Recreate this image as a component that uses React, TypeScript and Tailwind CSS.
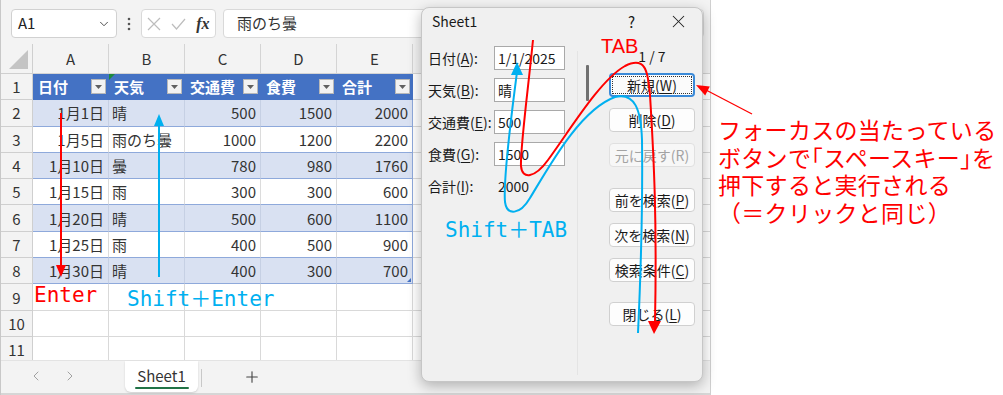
import React from "react";
import { ChevronDown, ChevronLeft, ChevronRight, Plus, X } from "lucide-react";

const JP = "font-['Noto_Sans_CJK_JP','Noto_Sans',sans-serif]";
const MONO = "font-['DejaVu_Sans_Mono','Noto_Sans_CJK_JP',monospace]";

const colLetters = ["A", "B", "C", "D", "E"];
const headers = ["日付", "天気", "交通費", "食費", "合計"];
const rows: string[][] = [
  ["1月1日", "晴", "500", "1500", "2000"],
  ["1月5日", "雨のち曇", "1000", "1200", "2200"],
  ["1月10日", "曇", "780", "980", "1760"],
  ["1月15日", "雨", "300", "300", "600"],
  ["1月20日", "晴", "500", "600", "1100"],
  ["1月25日", "雨", "400", "500", "900"],
  ["1月30日", "晴", "400", "300", "700"],
];

function FormulaBar() {
  return (
    <div className="h-[44px] flex items-start pt-[9px] pl-[10px] pr-[6px]">
      <div className="w-[106px] h-[29px] bg-white border border-[#d1d1d1] rounded-[4px] flex items-center justify-between pl-[6px] pr-[5px] text-[15px] text-[#222]">
        <span>A1</span>
        <ChevronDown size={14} strokeWidth={1.6} className="text-[#444]" />
      </div>
      <div className="w-[24px] h-[29px] flex items-center justify-center">
        <svg width="4" height="14" viewBox="0 0 4 14">
          <circle cx="2" cy="2" r="1.3" fill="#555" />
          <circle cx="2" cy="7" r="1.3" fill="#555" />
          <circle cx="2" cy="12" r="1.3" fill="#555" />
        </svg>
      </div>
      <div className="w-[75px] h-[29px] bg-white border border-[#d9d9d9] rounded-[4px] flex items-center">
        <div className="w-[25px] flex justify-center">
          <svg width="14" height="14" viewBox="0 0 14 14">
            <path d="M1 1 L13 13 M13 1 L1 13" stroke="#bdbdbd" strokeWidth="1.2" fill="none" />
          </svg>
        </div>
        <div className="w-[25px] flex justify-center">
          <svg width="15" height="12" viewBox="0 0 15 12">
            <path d="M1 6 L5.5 11 L14 1" stroke="#bdbdbd" strokeWidth="1.2" fill="none" />
          </svg>
        </div>
        <div className="w-[25px] flex justify-center font-['Liberation_Serif',serif] italic font-bold text-[16px] text-[#333] leading-none">
          fx
        </div>
      </div>
      <div className="ml-[7px] flex-1 h-[29px] bg-white border border-[#d9d9d9] rounded-[4px] flex items-center pl-[13px] text-[15px] text-[#333]">
        雨のち曇
      </div>
    </div>
  );
}

function DropBtn() {
  return (
    <div className="w-[15px] h-[15px] bg-[#f2f2f2] border border-[#b8b8b8] flex items-center justify-center">
      <svg width="7" height="4" viewBox="0 0 7 4">
        <path d="M0 0 L7 0 L3.5 4 Z" fill="#606060" />
      </svg>
    </div>
  );
}

function Grid() {
  const cells: React.ReactNode[] = [];
  cells.push(
    <div key="corner" className="bg-[#f3f3f3] border-r border-b border-[#cfcfcf] flex items-end justify-end pr-[4px] pb-[4px]">
      <svg width="19" height="19" viewBox="0 0 19 19">
        <path d="M19 0 L19 19 L0 19 Z" fill="#c4c4c4" />
      </svg>
    </div>
  );
  colLetters.forEach((c) =>
    cells.push(
      <div key={"ch" + c} className="bg-[#f3f3f3] border-r border-b border-[#d4d4d4] flex items-center justify-center text-[15px] text-[#333]">
        {c}
      </div>
    )
  );
  cells.push(<div key="chF" className="bg-[#f3f3f3] border-b border-[#d4d4d4]" />);

  cells.push(
    <div key="rh1" className="bg-[#f3f3f3] border-r border-b border-[#cfcfcf] flex items-center justify-center text-[15px] text-[#333]">
      1
    </div>
  );
  headers.forEach((h, i) =>
    cells.push(
      <div key={"th" + i} className="relative bg-[#4472c4] border-b border-[#4472c4] flex items-center justify-between pl-[5px] pr-[3px] text-[15px] font-bold text-white">
        <span>{h}</span>
        <DropBtn />
        {i === 1 && (
          <div className="absolute left-0 top-0 w-0 h-0 border-t-[6px] border-r-[6px] border-t-[#1e8a3e] border-r-transparent" />
        )}
      </div>
    )
  );
  cells.push(<div key="f1" className="bg-white border-b border-[#d9d9d9]" />);

  rows.forEach((r, ri) => {
    const band = ri % 2 === 0;
    const n = ri + 2;
    cells.push(
      <div key={"rh" + n} className="bg-[#f3f3f3] border-r border-b border-[#cfcfcf] flex items-center justify-center text-[15px] text-[#333]">
        {n}
      </div>
    );
    r.forEach((v, ci) => {
      const right = ci !== 1;
      const last = ci === 4;
      cells.push(
        <div
          key={"c" + n + ci}
          className={
            "relative flex items-center text-[15px] text-[#333] border-b border-b-[#8ea9db] border-r whitespace-nowrap " +
            (band ? "bg-[#d9e1f2] " : "bg-white ") +
            (last ? "border-r-[#8ea9db] " : band ? "border-r-[#c6d0e4] " : "border-r-[#dcdcdc] ") +
            (right ? "justify-end pr-[4px]" : "justify-start pl-[3px]")
          }
        >
          {v}
          {last && ri === rows.length - 1 && (
            <div className="absolute right-[1px] bottom-[1px] w-0 h-0 border-b-[4px] border-l-[4px] border-b-[#4472c4] border-l-transparent" />
          )}
        </div>
      );
    });
    cells.push(<div key={"f" + n} className="bg-white border-b border-[#d9d9d9]" />);
  });

  [9, 10, 11].forEach((n) => {
    cells.push(
      <div key={"rh" + n} className="bg-[#f3f3f3] border-r border-b border-[#cfcfcf] flex items-center justify-center text-[15px] text-[#333]">
        {n}
      </div>
    );
    colLetters.forEach((c) =>
      cells.push(<div key={"e" + n + c} className="bg-white border-r border-b border-[#d9d9d9]" />)
    );
    cells.push(<div key={"ef" + n} className="bg-white border-b border-[#d9d9d9]" />);
  });

  return (
    <div className="flex-1 overflow-hidden">
      <div className="grid grid-cols-[32px_76px_76px_76px_76px_76px_1fr] grid-rows-[30px_repeat(11,26.3px)] leading-none">
        {cells}
      </div>
    </div>
  );
}

function TabBar() {
  return (
    <div className="h-[35px] bg-[#f3f3f3] border-t border-[#e3e3e3] border-b-2 border-b-[#d6d6d6] flex items-start">
      <div className="w-[43px] h-[30px] flex items-center justify-end">
        <ChevronLeft size={16} strokeWidth={1.4} className="text-[#9a9a9a]" />
      </div>
      <div className="w-[34px] h-[30px] flex items-center justify-end">
        <ChevronRight size={16} strokeWidth={1.4} className="text-[#9a9a9a]" />
      </div>
      <div className="ml-[47px] w-[73px] h-[31px] bg-white rounded-b-[6px] shadow-[0_1px_2px_rgba(0,0,0,0.15)] flex flex-col items-center pt-[6px]">
        <span className="text-[15px] leading-[18px] text-[#333]">Sheet1</span>
        <div className="mt-[2px] w-[54px] h-[2px] rounded bg-[#217346]" />
      </div>
      <div className="ml-[3px] mt-[8px] w-px h-[18px] bg-[#c8c8c8]" />
      <div className="ml-[41px] h-[31px] flex items-center">
        <Plus size={18} strokeWidth={1.5} className="text-[#444]" />
      </div>
    </div>
  );
}

function ExcelWindow() {
  return (
    <div className="w-[711px] h-full flex flex-col bg-[#f3f3f3] border-r border-[#d0d0d0] border-l border-l-[#c8c8c8]">
      <FormulaBar />
      <Grid />
      <TabBar />
    </div>
  );
}

function Label({ a, k, b }: { a: string; k: string; b: string }) {
  return (
    <span>
      {a}(<span className="underline underline-offset-2">{k}</span>){b}
    </span>
  );
}

function Field({ a, k, value }: { a: string; k: string; value: string }) {
  return (
    <div className="h-[24px] flex items-center">
      <div className="w-[66px]">
        <Label a={a} k={k} b=":" />
      </div>
      <div className="w-[71px] h-[24px] bg-white border border-[#a9a9a9] flex items-center pl-[3px]">{value}</div>
    </div>
  );
}

function Btn({ a, k, focus, disabled, className }: { a: string; k: string; focus?: boolean; disabled?: boolean; className?: string }) {
  return (
    <div
      className={
        "w-[86px] h-[24px] rounded-[4px] flex items-center justify-center " +
        (focus
          ? "border-2 border-[#3b8ad8] bg-[#fbfbfb] p-[1px] "
          : disabled
          ? "border border-[#e0e0e0] bg-[#f7f7f7] text-[#a3a3a3] "
          : "border border-[#d0d0d0] bg-[#fdfdfd] ") +
        (className || "")
      }
    >
      {focus ? (
        <div className="w-full h-full border border-dotted border-[#333] flex items-center justify-center">
          <Label a={a} k={k} b="" />
        </div>
      ) : disabled ? (
        <span>
          {a}({k})
        </span>
      ) : (
        <Label a={a} k={k} b="" />
      )}
    </div>
  );
}

function Dialog() {
  return (
    <div className="absolute left-[421px] top-[7px] w-[282px] h-[375px] bg-[#f0f0f0] border border-[#c6c6c6] rounded-[8px] shadow-[0_4px_14px_rgba(0,0,0,0.28)] flex flex-col text-[14px] text-[#1a1a1a] leading-none">
      <div className="h-[26px] flex items-center pl-[10px] pr-[13px]">
        <span className="text-[14px]">Sheet1</span>
        <div className="flex-1" />
        <span className="text-[15px]">?</span>
        <X size={21} strokeWidth={1.2} className="ml-[33px] text-[#222]" />
      </div>
      <div className="flex-1 flex">
        <div className="w-[155px] pl-[6px] pt-[12px] flex flex-col gap-[8px]">
          <Field a="日付" k="A" value="1/1/2025" />
          <Field a="天気" k="B" value="晴" />
          <Field a="交通費" k="E" value="500" />
          <Field a="食費" k="G" value="1500" />
          <div className="h-[24px] flex items-center">
            <div className="w-[70px]">
              <Label a="合計" k="I" b=":" />
            </div>
            <span>2000</span>
          </div>
        </div>
        <div className="mt-[17px] mb-[6px] w-px bg-white border-l border-[#e4e4e4]" />
        <div className="flex">
          <div className="ml-[8px] mt-[31px] w-[3px] h-[36px] bg-[#707070] rounded-[1px]" />
          <div className="ml-[20px] flex flex-col items-center">
            <div className="pt-[14px] h-[30px] leading-[16px] text-[14px]">1 / 7</div>
            <Btn a="新規" k="W" focus className="mt-[9px]" />
            <Btn a="削除" k="D" className="mt-[11px]" />
            <Btn a="元に戻す" k="R" disabled className="mt-[11px]" />
            <Btn a="前を検索" k="P" className="mt-[21px]" />
            <Btn a="次を検索" k="N" className="mt-[11px]" />
            <Btn a="検索条件" k="C" className="mt-[11px]" />
            <Btn a="閉じる" k="L" className="mt-[20px]" />
          </div>
        </div>
      </div>
    </div>
  );
}

function Annotations() {
  return (
    <>
      <svg className="absolute left-0 top-0 pointer-events-none" width="1003" height="395" viewBox="0 0 1003 395">
        <line x1="61" y1="113" x2="61" y2="267" stroke="#ff0000" strokeWidth="2" />
        <polygon points="56,265 66,265 61,277" fill="#ff0000" />
        <line x1="159" y1="277" x2="159" y2="124" stroke="#00b0f0" strokeWidth="2" />
        <polygon points="154,126 164,126 159,114" fill="#00b0f0" />
        <path
          d="M533,40 C528,90 520,150 521,166 C522,180 535,178 548,160 C570,130 600,80 625,66 C645,56 648,70 650,95 C654,160 657,220 655,322"
          stroke="#ff0000"
          strokeWidth="2"
          fill="none"
        />
        <polygon points="648,321 661,321 654,334" fill="#ff0000" />
        <path
          d="M517,72 C512,110 503,180 505,202 C507,216 520,215 530,198 C550,165 580,110 615,97 C635,92 641,110 642,140 C643,220 640,290 638,333"
          stroke="#00b0f0"
          strokeWidth="2"
          fill="none"
        />
        <polygon points="511,75 523,75 517,62" fill="#00b0f0" />
        <line x1="752" y1="114" x2="706" y2="90" stroke="#ff0000" strokeWidth="1.3" />
        <polygon points="696,85 705.2,95.4 709.8,86.6" fill="#ff0000" />
      </svg>
      <div className={`absolute left-[34px] top-[285px] text-[21px] leading-none text-[#ff0000] ${MONO}`}>Enter</div>
      <div className={`absolute left-[127px] top-[289px] text-[21px] leading-none text-[#00b0f0] whitespace-nowrap ${MONO}`}>
        Shift＋Enter
      </div>
      <div className={`absolute left-[445px] top-[220px] text-[21px] leading-none text-[#00b0f0] whitespace-nowrap ${MONO}`}>
        Shift＋TAB
      </div>
      <div className="absolute left-[601px] top-[36px] text-[20px] leading-none text-[#ff0000] font-['Liberation_Sans',sans-serif]">
        TAB
      </div>
    </>
  );
}

export default function App() {
  return (
    <div className={`relative w-[1003px] h-[395px] overflow-hidden bg-white flex ${JP}`}>
      <ExcelWindow />
      <div className="flex-1 pl-[7px] pt-[116px] text-[23px] leading-[27.7px] tracking-[0.3px] text-[#ff0000] whitespace-nowrap">
        <div>フォーカスの当たっている</div>
        <div>
          ボタンで<span className="[font-feature-settings:'halt']">「</span>スペースキー<span className="[font-feature-settings:'halt']">」</span>を
        </div>
        <div>押下すると実行される</div>
        <div>（＝クリックと同じ）</div>
      </div>
      <Dialog />
      <Annotations />
    </div>
  );
}
